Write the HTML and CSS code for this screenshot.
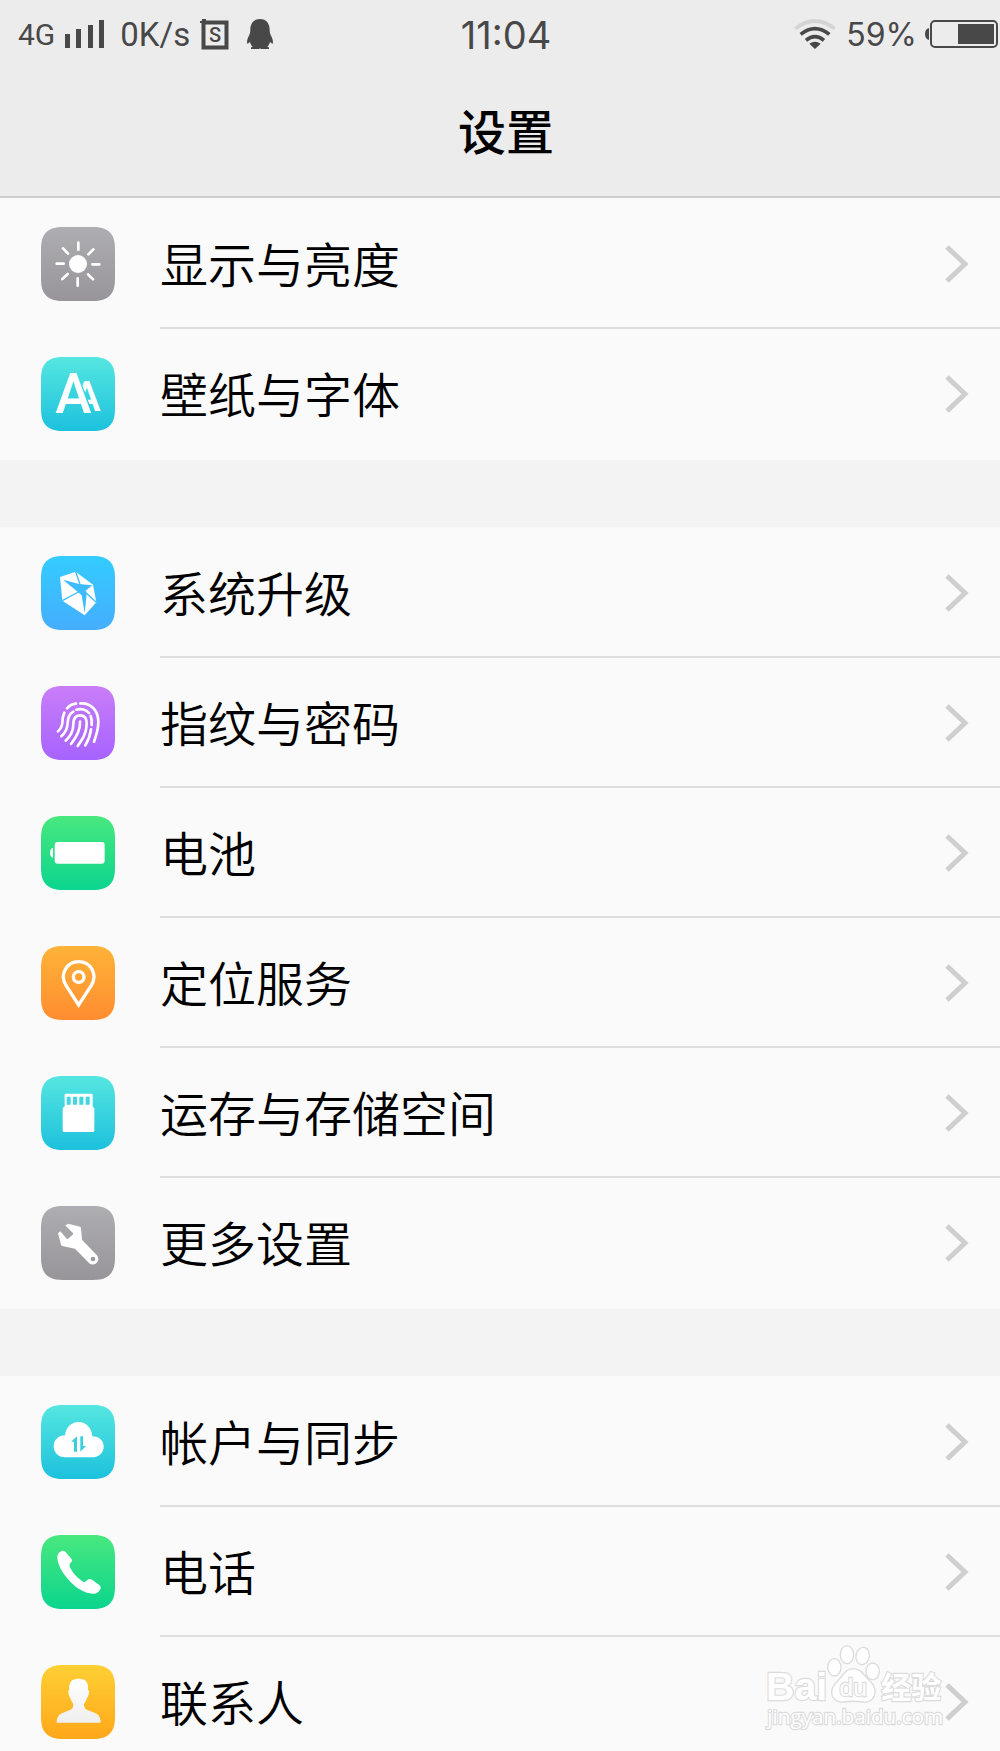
FILE: index.html
```html
<!DOCTYPE html>
<html lang="zh">
<head>
    <meta charset="UTF-8">
    <meta name="viewport" content="width=device-width, initial-scale=1.0">
    <title>设置</title>
    <link rel="stylesheet" href="styles.css">
</head>
<body>
    <!-- 公共图形 -->
    <svg class="defs" aria-hidden="true">
        <defs>
            <linearGradient id="gray" x2="0" y2="1"><stop stop-color="#aeadb2"/><stop offset="1" stop-color="#979599"/></linearGradient>
            <linearGradient id="cyan" x2="0" y2="1"><stop stop-color="#55e6e0"/><stop offset="1" stop-color="#1dc1dd"/></linearGradient>
            <linearGradient id="blue" x2="0" y2="1"><stop stop-color="#33ccff"/><stop offset="1" stop-color="#45adff"/></linearGradient>
            <linearGradient id="purple" x2="0" y2="1"><stop stop-color="#c97df8"/><stop offset="1" stop-color="#a663ff"/></linearGradient>
            <linearGradient id="green" x2="0" y2="1"><stop stop-color="#48e87e"/><stop offset="1" stop-color="#0bd58e"/></linearGradient>
            <linearGradient id="orange" x2="0" y2="1"><stop stop-color="#ffb338"/><stop offset="1" stop-color="#ff8d30"/></linearGradient>
            <linearGradient id="yellow" x2="0" y2="1"><stop stop-color="#ffd034"/><stop offset="1" stop-color="#ffa719"/></linearGradient>
            <linearGradient id="white" x2="0" y2="1"><stop stop-color="#fff"/><stop offset="1" stop-color="#efefef"/></linearGradient>
            <clipPath id="behind"><path d="M110 47H222V180H160Z"/></clipPath>
        </defs>
        <symbol id="tile" viewBox="0 0 222 222">
            <path d="M66 0H156C202 0 222 20 222 66V156C222 202 202 222 156 222H66C20 222 0 202 0 156V66C0 20 20 0 66 0Z"/>
        </symbol>
        <symbol id="arrow" viewBox="0 0 24 38">
            <path d="M2 2L20 19L2 36" fill="none" stroke="#cfcfcf" stroke-width="5"/>
        </symbol>
    </svg>

    <div class="screen">
        <header class="header">
            <div class="status">
                <div class="status-left">
                    <span class="network">4G</span>
                    <svg class="signal" viewBox="0 0 39 28"><path d="M0 14h5v14H0zM11 9h5v19h-5zM23 5h5v23h-5zM34 0h5v28h-5z"/></svg>
                    <span class="speed">0K/s</span>
                    <svg class="shot" viewBox="0 0 29 31">
                        <path d="M3.500 3.500H26.500V28.500H3.500Z" fill="none" stroke="#484848" stroke-width="4"/>
                        <path d="M0 2h2V0h4v4H0z"/>
                        <text x="15" y="23" text-anchor="middle">S</text>
                    </svg>
                    <svg class="qq" viewBox="0 0 78 90"><path d="M39 0C58 0 68 14 68 32C68 39 69 44 73 52C77 60 79 68 77 74C75 75 72 71 69 68C68 74 65 79 61 83C65 84 67 86 66 90H42L39 88L36 90H12C11 86 13 84 17 83C13 79 10 74 9 68C6 71 3 75 1 74C-1 68 1 60 5 52C9 44 10 39 10 32C10 14 20 0 39 0Z"/></svg>
                </div>
                <time class="clock">11:04</time>
                <div class="status-right">
                    <svg class="wifi" viewBox="0 0 126 90" fill="none" stroke-width="11">
                        <path d="M4 29Q63 -17 122 29" stroke="#d4d4d4"/>
                        <path d="M20 46Q63 12 106 46M36 64Q63 42 90 64" stroke="#484848"/>
                        <path d="M46 74Q63 62 80 74L63 90Z" fill="#484848"/>
                    </svg>
                    <span class="percent">59%</span>
                    <svg class="power" viewBox="0 0 73 28">
                        <path d="M4 8Q0 9 0 14T4 20Z"/>
                        <rect x="6" y="1" width="66" height="26" rx="4" fill="none" stroke="#484848" stroke-width="2"/>
                        <path d="M33 4H69V24H33Z"/>
                    </svg>
                </div>
            </div>
            <h1>设置</h1>
        </header>

        <main class="list">
            <nav class="group">
                <a class="row" href="#display">
                    <svg class="icon" viewBox="0 0 222 222">
                        <use href="#tile" fill="url(#gray)"/>
                        <circle cx="111" cy="111" r="27"/>
                        <path class="line" d="M112 47V68M110 154V176M47 110H68M154 112H175M66 64L81 80M142 82L157 67M64 156L80 141M141 142L156 157"/>
                    </svg>
                    <span class="label">显示与亮度</span>
                    <svg class="arrow"><use href="#arrow"/></svg>
                </a>
                <a class="row" href="#wallpaper">
                    <svg class="icon" viewBox="0 0 222 222">
                        <use href="#tile" fill="url(#cyan)"/>
                        <g clip-path="url(#behind)"><text class="small-a" x="137" y="161">A</text></g>
                        <text class="big-a" x="97" y="169">A</text>
                    </svg>
                    <span class="label">壁纸与字体</span>
                    <svg class="arrow"><use href="#arrow"/></svg>
                </a>
            </nav>

            <nav class="group">
                <a class="row" href="#update">
                    <svg class="icon" viewBox="0 0 222 222">
                        <use href="#tile" fill="url(#blue)"/>
                        <path d="M57 63L104 47L156 86L166 139L131 178L64 134Z"/>
                        <path d="M66 71L114 84L154 88L134 104L137 114L131 172L122 118L107 105Z" fill="#3dbbff"/>
                        <path d="M104 47L118 88M64 134L112 108M166 139L132 108" fill="none" stroke="#3dbbff" stroke-width="4"/>
                    </svg>
                    <span class="label">系统升级</span>
                    <svg class="arrow"><use href="#arrow"/></svg>
                </a>
                <a class="row" href="#fingerprint">
                    <svg class="icon" viewBox="0 0 222 222">
                        <use href="#tile" fill="url(#purple)"/>
                        <path class="line" d="M70 80C65 91 64 98 64 111C63 122 59 129 51 136M78 67C85 59 94 54 105 53M118 52C154 50 172 78 172 108C172 132 166 148 159 167M97 77C80 86 81 103 79 119C77 133 71 142 61 151M106 71C120 67 136 71 144 81M149 90C153 100 153 108 152 117M150 130C147 152 142 163 133 178M74 164C92 148 97 135 97 115C97 98 103 88 117 88C132 88 138 99 137 115C136 144 124 160 110 180M117 107C119 134 105 155 90 174"/>
                    </svg>
                    <span class="label">指纹与密码</span>
                    <svg class="arrow"><use href="#arrow"/></svg>
                </a>
                <a class="row" href="#battery">
                    <svg class="icon" viewBox="0 0 222 222">
                        <use href="#tile" fill="url(#green)"/>
                        <rect x="41" y="78" width="150" height="65" rx="9"/>
                        <path d="M36 96V125C30 125 27 118 27 111S30 96 36 96Z"/>
                    </svg>
                    <span class="label">电池</span>
                    <svg class="arrow"><use href="#arrow"/></svg>
                </a>
                <a class="row" href="#location">
                    <svg class="icon" viewBox="0 0 222 222">
                        <use href="#tile" fill="url(#orange)"/>
                        <g fill="none" stroke="#fff" stroke-width="10">
                            <path d="M113 177L75 118C55 86 76 47 113 47S171 86 151 118Z"/>
                            <circle cx="113" cy="93" r="16"/>
                        </g>
                    </svg>
                    <span class="label">定位服务</span>
                    <svg class="arrow"><use href="#arrow"/></svg>
                </a>
                <a class="row" href="#storage">
                    <svg class="icon" viewBox="0 0 222 222">
                        <use href="#tile" fill="url(#cyan)"/>
                        <path d="M75 53H151Q155 53 155 57V91L160 97V164Q160 168 156 168H69Q65 168 65 164V97L71 91V57Q71 53 75 53Z"/>
                        <path d="M79 62h10v24H77v-22zM98 62h10v24H96v-22zM117 62h10v24h-12v-22zM136 62h10v24h-12v-22z" fill="#40d7de"/>
                    </svg>
                    <span class="label">运存与存储空间</span>
                    <svg class="arrow"><use href="#arrow"/></svg>
                </a>
                <a class="row" href="#more">
                    <svg class="icon" viewBox="0 0 222 222">
                        <use href="#tile" fill="url(#gray)"/>
                        <path d="M75 61Q71 57 76 56L82 53L117 62Q120 63 120 67L123 101L167 147A16 16 0 0 1 144 171L102 128L63 120L60 116L51 82L58 76L76 97Q79 101 83 97L95 86Q98 83 95 80Z"/>
                        <circle cx="156" cy="159" r="7" fill="#9c9a9f"/>
                    </svg>
                    <span class="label">更多设置</span>
                    <svg class="arrow"><use href="#arrow"/></svg>
                </a>
            </nav>

            <nav class="group">
                <a class="row" href="#account">
                    <svg class="icon" viewBox="0 0 222 222">
                        <use href="#tile" fill="url(#cyan)"/>
                        <path d="M72 157C51 157 38 142 38 124C38 105 53 91 72 91C74 68 91 51 113 51S152 68 154 94C173 94 188 106 188 125C188 143 174 157 154 157Z"/>
                        <path d="M108 94V140H99V110H90ZM118 94H126V123H135L118 140Z" fill="#36cfde"/>
                    </svg>
                    <span class="label">帐户与同步</span>
                    <svg class="arrow"><use href="#arrow"/></svg>
                </a>
                <a class="row" href="#phone">
                    <svg class="icon" viewBox="0 0 222 222">
                        <use href="#tile" fill="url(#green)"/>
                        <path d="M49 66C49 56 57 48 66 47Q70 47 73 50L91 71C95 76 94 78 90 82C85 87 84 92 88 99C97 116 112 132 128 141C133 143 137 136 142 133Q148 131 153 134L175 150Q180 153 179 160C176 169 169 176 160 176C144 177 130 172 116 163C84 143 49 98 49 66Z"/>
                    </svg>
                    <span class="label">电话</span>
                    <svg class="arrow"><use href="#arrow"/></svg>
                </a>
                <a class="row" href="#contacts">
                    <svg class="icon" viewBox="0 0 222 222">
                        <use href="#tile" fill="url(#yellow)"/>
                        <path d="M85 76C82 52 92 41 113 41S144 52 141 76Q146 76 144 83C142 93 139 98 137 101C134 112 129 112 129 121Q129 130 137 134L162 144C174 149 179 159 179 173H47C47 159 52 149 64 144L89 134Q97 130 97 121C97 112 92 112 89 101C87 98 84 93 82 83Q80 76 85 76Z" fill="url(#white)"/>
                    </svg>
                    <span class="label">联系人</span>
                    <svg class="arrow"><use href="#arrow"/></svg>
                </a>
            </nav>
        </main>

        <!-- 水印 -->
        <svg class="watermark" viewBox="45 35 546 264">
            <text class="wm-name" x="48" y="207">Bai</text>
            <ellipse cx="253" cy="108" rx="20" ry="26"/>
            <ellipse cx="291" cy="70" rx="20" ry="27"/>
            <ellipse cx="338" cy="74" rx="20" ry="26" transform="rotate(12 338 74)"/>
            <ellipse cx="368" cy="120" rx="20" ry="25"/>
            <path d="M310 112C330 112 341 129 353 142C366 155 377 164 375 184C373 207 355 214 338 212C320 209 302 209 283 212C262 215 246 203 245 184C244 162 260 154 270 141C281 127 290 112 310 112Z"/>
            <text class="wm-du" x="310" y="195">du</text>
            <text class="wm-cn" x="394" y="200">经验</text>
            <text class="wm-url" x="52" y="278">jingyan.baidu.com</text>
        </svg>
    </div>
</body>
</html>
```
FILE: styles.css
```css
* {
    box-sizing: border-box;
}
body {
    margin: 0;
    background-color: #f3f3f3;
    color: #000;
    font-family: Roboto, "Noto Sans CJK SC", sans-serif;
}
.defs {
    position: absolute;
    width: 0;
    height: 0;
}
.screen {
    position: relative;
    display: flex;
    flex-direction: column;
    height: 100vh;
    overflow: hidden;
}
.header {
    flex: none;
    background-color: #ececec;
    border-bottom: 2px solid #cdcdcd;
}

/* 状态栏 */
.status {
    display: grid;
    grid-template-columns: 1fr auto 1fr;
    align-items: center;
    height: 68px;
    padding: 0 2px 0 18px;
    color: #484848;
    fill: #484848;
}
.status-left, .status-right {
    display: flex;
    align-items: center;
}
.status-right {
    justify-content: flex-end;
}
.network {
    font-size: 30px;
}
.speed {
    font-size: 33px;
}
.percent {
    font-family: Inter, sans-serif;
    font-size: 32px;
}
.clock {
    padding: 2px 4px 0 0;
    font-family: Inter, sans-serif;
    font-size: 38px;
}
.signal {
    width: 39px;
    height: 28px;
    margin: 0 16px 0 10px;
}
.shot {
    width: 29px;
    height: 31px;
    margin: 0 18px 0 10px;
    font-size: 20px;
    font-weight: 500;
}
.qq {
    width: 26px;
    height: 30px;
}
.wifi {
    width: 42px;
    height: 30px;
    margin-right: 10px;
}
.power {
    width: 73px;
    height: 28px;
    margin-left: 8px;
}
h1 {
    margin: 0;
    height: 128px;
    padding: 2px 0 0 12px;
    line-height: 128px;
    font-size: 48px;
    font-weight: 500;
    text-align: center;
}

/* 设置列表 */
.list {
    flex: 1;
    overflow: hidden;
}
.group {
    margin-bottom: 67px;
    padding: 1px 0;
    background-color: #fafafa;
}
.row {
    position: relative;
    display: flex;
    align-items: center;
    gap: 45px;
    height: 130px;
    padding: 0 31px 0 41px;
    color: #000;
    text-decoration: none;
}
.row:not(:last-child)::after {
    content: "";
    position: absolute;
    left: 160px;
    right: 0;
    bottom: 0;
    height: 2px;
    background-color: #dedede;
}
.icon {
    flex: none;
    width: 74px;
    height: 74px;
    fill: #fff;
}
.line {
    fill: none;
    stroke: #fff;
    stroke-width: 8px;
    stroke-linecap: round;
}
.big-a, .small-a {
    font-weight: 500;
    text-anchor: middle;
}
.big-a {
    font-size: 164px;
}
.small-a {
    font-size: 128px;
}
.label {
    flex: 1;
    padding-top: 5px;
    font-size: 48px;
    font-weight: 350;
    line-height: 64px;
}
.arrow {
    flex: none;
    width: 24px;
    height: 38px;
}

/* 水印 */
.watermark {
    position: absolute;
    right: 53px;
    bottom: 20px;
    width: 182px;
    height: 88px;
    fill: #fff;
    stroke: #dcdcdc;
    stroke-width: 4px;
    pointer-events: none;
}
.watermark text {
    paint-order: stroke;
    stroke-width: 7px;
}
.wm-name {
    font-family: "Liberation Sans", sans-serif;
    font-size: 118px;
    font-weight: bold;
}
.watermark .wm-du {
    font-family: "Liberation Sans", sans-serif;
    font-size: 74px;
    text-anchor: middle;
}
.wm-cn {
    font-size: 90px;
    font-weight: bold;
}
.wm-url {
    font-family: "Open Sans", sans-serif;
    font-size: 62px;
}
```
